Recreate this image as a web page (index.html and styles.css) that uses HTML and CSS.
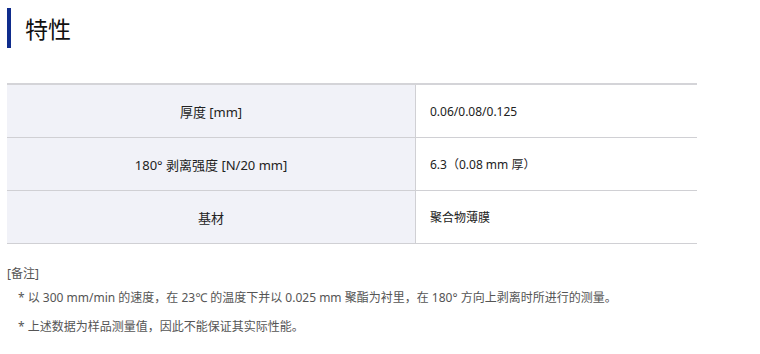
FILE: index.html
```html
<!DOCTYPE html>
<html lang="zh-CN">
<head>
<meta charset="utf-8">
<link rel="stylesheet" href="styles.css">
</head>
<body>
<div class="page">
  <h2 class="title">特性</h2>
  <table class="spec">
    <tr><th>厚度 [mm]</th><td>0.06/0.08/0.125</td></tr>
    <tr><th>180° 剥离强度 [N/20 mm]</th><td>6.3（0.08 mm 厚）</td></tr>
    <tr><th>基材</th><td>聚合物薄膜</td></tr>
  </table>
  <div class="notes">
    <p class="notes-head">[备注]</p>
    <p class="note">* 以 300 mm/min 的速度，在 23℃ 的温度下并以 0.025 mm 聚酯为衬里，在 180° 方向上剥离时所进行的测量。</p>
    <p class="note">* 上述数据为样品测量值，因此不能保证其实际性能。</p>
  </div>
</div>
</body>
</html>
```
FILE: styles.css
```css
html, body {
  margin: 0;
  padding: 0;
  background: #fff;
}
body {
  font-family: "Noto Sans", "Noto Sans CJK SC", sans-serif;
  color: #222;
}
.page {
  padding: 8px 63px 0 7px;
}
.title {
  margin: 0;
  height: 40px;
  border-left: 4px solid #0f2c8c;
  padding-left: 14px;
  font-family: "Noto Sans CJK SC", sans-serif;
  font-size: 23px;
  font-weight: normal;
  line-height: 40px;
  color: #111;
}
.spec {
  margin-top: 35px;
  width: 690px;
  border-collapse: collapse;
  border-top: 2px solid #d4d4d8;
}
.spec th, .spec td {
  height: 52px;
  padding: 0;
  border-bottom: 1px solid #d0d0d4;
  font-weight: normal;
}
.spec th {
  width: 408px;
  background: #f1f2f8;
  border-right: 1px solid #d0d0d4;
  text-align: center;
  font-size: 13px;
  color: #222;
}
.spec td {
  padding-left: 14px;
  font-size: 12px;
  color: #222;
}
.notes {
  margin-top: 21px;
  font-size: 12px;
  color: #555;
}
.notes p {
  margin: 0;
  line-height: 18px;
}
.notes-head {
  padding-bottom: 6px;
}
.note {
  padding-left: 11px;
  margin-bottom: 11px !important;
}
```
